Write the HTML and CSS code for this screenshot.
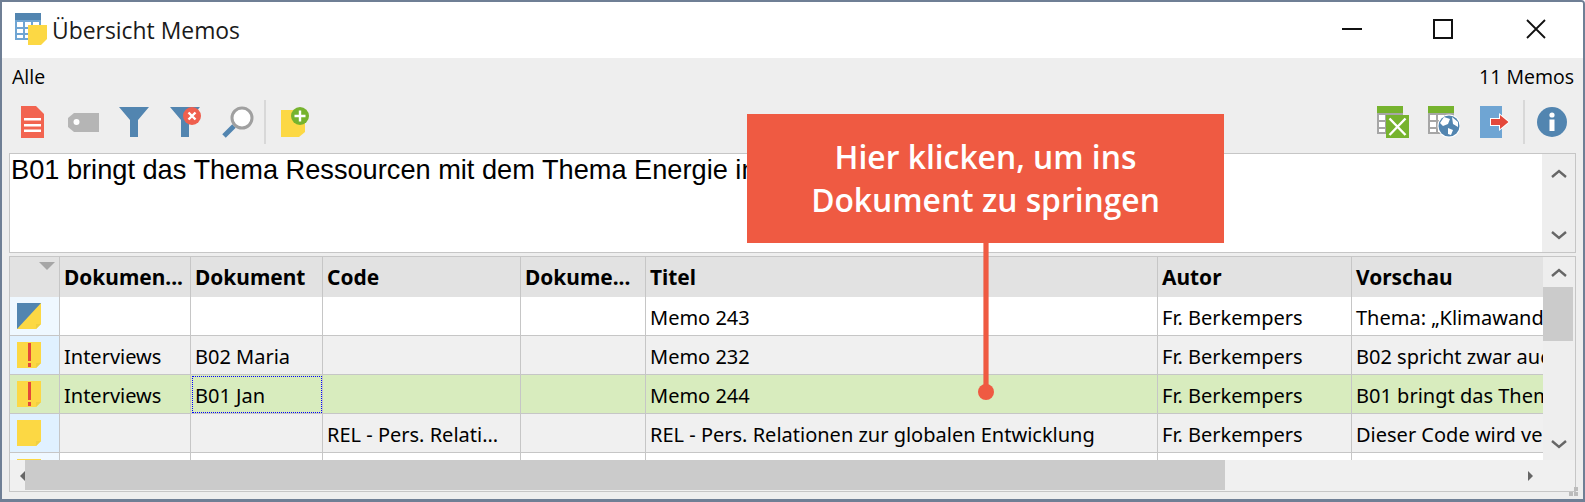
FILE: index.html
```html
<!doctype html>
<html lang="de">
<head>
<meta charset="utf-8">
<title>Übersicht Memos</title>
<link rel="stylesheet" href="styles.css">
</head>
<body>

<svg class="defs" width="0" height="0">
  <symbol id="note" viewBox="0 0 24 26">
    <path d="M0 0H24V21L19 26H0Z" fill="#fcd844"/>
    <path d="M24 21L19 26V21Z" fill="#f0cf40"/>
  </symbol>
  <symbol id="note-warn" viewBox="0 0 24 26">
    <use href="#note" width="24" height="26"/>
    <path d="M11 1H14V19H11ZM11 21H14V25H11Z" fill="#e4483a"/>
  </symbol>
  <symbol id="note-half" viewBox="0 0 24 26">
    <use href="#note" width="24" height="26"/>
    <path d="M0 0H24L0 26Z" fill="#5285b0"/>
  </symbol>
  <symbol id="funnel" viewBox="0 0 30 30">
    <path d="M0 0H30L19 13V30H11V13Z" fill="#5285b0"/>
  </symbol>
  <symbol id="sheet" viewBox="0 0 26 28">
    <path d="M0 0H26V28H0Z" fill="#a6a6a6"/>
    <path d="M0 0H26V7H0Z" fill="#76b32e"/>
    <path d="M2 9H8V14H2ZM10 9H16V14H10ZM18 9H24V14H18ZM2 16H8V21H2ZM10 16H16V21H10ZM18 16H24V21H18ZM2 23H8V26H2ZM10 23H16V26H10ZM18 23H24V26H18Z" fill="#fff"/>
  </symbol>
</svg>

<div class="window">

  <div class="titlebar">
    <svg class="appicon" width="32" height="32" viewBox="0 0 32 32">
      <path d="M0 0H26V7H0Z" fill="#5285b0"/>
      <path d="M0 7H26V27H0Z" fill="#6fa5d3"/>
      <path d="M2 9H8V14H2ZM10 9H16V14H10ZM18 9H24V14H18ZM2 16H8V20H2ZM10 16H16V20H10ZM2 22H8V25H2ZM10 22H16V25H10Z" fill="#fff"/>
      <path d="M13 12H32V26L26 32H13Z" fill="#fcd844"/>
    </svg>
    <span class="wintitle">Übersicht Memos</span>
    <div class="wincontrols">
      <svg class="winmin" width="20" height="20" viewBox="0 0 20 20"><path d="M0 10H20" stroke="#111" stroke-width="2"/></svg>
      <svg width="20" height="20" viewBox="0 0 20 20"><rect x="1" y="1" width="18" height="18" fill="none" stroke="#111" stroke-width="2"/></svg>
      <svg width="20" height="20" viewBox="0 0 20 20"><path d="M1 1L19 19M19 1L1 19" stroke="#111" stroke-width="1.8" fill="none"/></svg>
    </div>
  </div>

  <div class="infobar">
    <span>Alle</span>
    <span>11 Memos</span>
  </div>

  <div class="toolbar">
    <svg class="tb tb-doc" width="23" height="32" viewBox="0 0 23 32">
      <path d="M0 0H15L23 8V32H0Z" fill="#f26450"/>
      <path d="M3 12H20V14.5H3ZM3 18H20V20.5H3ZM3 23.5H20V26H3Z" fill="#fff"/>
    </svg>
    <svg class="tb tb-tag" width="31" height="19" viewBox="0 0 31 19">
      <path d="M6 0H31V19H6L0 14V5Z" fill="#b5b5b5"/>
      <circle cx="8.500" cy="9" r="3" fill="#fff"/>
    </svg>
    <svg class="tb tb-filter" width="30" height="30"><use href="#funnel"/></svg>
    <svg class="tb tb-filteroff" width="31" height="30" viewBox="0 0 31 30">
      <use href="#funnel" width="30" height="30"/>
      <circle cx="22" cy="9" r="9" fill="#ef5f4e"/>
      <path d="M18.500 5.500L25.500 12.500M25.500 5.500L18.500 12.500" stroke="#fff" stroke-width="2.400"/>
    </svg>
    <svg class="tb tb-search" width="32" height="32" viewBox="0 0 32 32">
      <path d="M2 30L12 20" stroke="#5285b0" stroke-width="5"/>
      <circle cx="20" cy="12" r="10" fill="#fff" stroke="#a0a0a0" stroke-width="3"/>
    </svg>
    <span class="tb-sep"></span>
    <svg class="tb tb-noteadd" width="29" height="32" viewBox="0 0 29 32">
      <path d="M0 4H24V26L18 31H0Z" fill="#fcd844"/>
      <circle cx="19" cy="10" r="9" fill="#76b32e"/>
      <path d="M19 4.500V15.500M13.500 10H24.500" stroke="#fff" stroke-width="2.400"/>
    </svg>
    <span class="tb-spacer"></span>
    <svg class="tb tb-xls" width="32" height="32" viewBox="0 0 32 32">
      <use href="#sheet" width="26" height="28"/>
      <path d="M9 9H32V32H9Z" fill="#76b32e"/>
      <path d="M12.500 12.500L28.500 29M28.500 12.500L12.500 29" stroke="#fff" stroke-width="2.400"/>
    </svg>
    <svg class="tb tb-web" width="32" height="32" viewBox="0 0 32 32">
      <use href="#sheet" width="26" height="28"/>
      <circle cx="21" cy="20" r="11.500" fill="#fff"/>
      <circle cx="21" cy="20" r="10.500" fill="#5285b0"/>
      <path d="M16 11L22 13L20 18L15 20L12 17ZM24 11L30 16L30 21L25 18ZM20 22L25 24L23 29L20 28Z" fill="#fff"/>
    </svg>
    <svg class="tb tb-exit" width="30" height="32" viewBox="0 0 30 32">
      <path d="M0 0H22V32H0Z" fill="#6fa5d3"/>
      <path d="M10 12H19V7L30 16L19 25V20H10Z" fill="#fff"/>
      <path d="M11 13H20V9L28.500 16L20 23V19H11Z" fill="#e4483a"/>
    </svg>
    <span class="tb-sep tb-sep-right"></span>
    <svg class="tb tb-info" width="30" height="30" viewBox="0 0 30 30">
      <circle cx="15" cy="15" r="15" fill="#5285b0"/>
      <circle cx="15" cy="8" r="2.600" fill="#fff"/>
      <path d="M12.500 12.500H17.500V24H12.500Z" fill="#fff"/>
    </svg>
  </div>

  <div class="preview">
    <div class="previewtext">B01 bringt das Thema Ressourcen mit dem Thema Energie in</div>
    <div class="vscroll preview-scroll">
      <svg class="arrow" width="16" height="9" viewBox="0 0 16 9"><path d="M1 8L8 2L15 8" fill="none" stroke="#666" stroke-width="2.400"/></svg>
      <svg class="arrow" width="16" height="9" viewBox="0 0 16 9"><path d="M1 1L8 7L15 1" fill="none" stroke="#666" stroke-width="2.400"/></svg>
    </div>
  </div>

  <div class="grid">
    <div class="gridtop">
      <div class="gridclip">
        <table class="memos">
          <colgroup>
            <col class="c-icon"><col class="c-type"><col class="c-doc"><col class="c-code"><col class="c-group"><col class="c-title"><col class="c-author"><col class="c-preview">
          </colgroup>
          <tr class="head">
            <th class="sortcell"><span class="sortmark"></span></th>
            <th>Dokumen...</th>
            <th>Dokument</th>
            <th>Code</th>
            <th>Dokume...</th>
            <th>Titel</th>
            <th>Autor</th>
            <th>Vorschau</th>
          </tr>
          <tr class="odd">
            <td class="iconcell"><svg class="noteicon"><use href="#note-half"/></svg></td>
            <td></td>
            <td></td>
            <td></td>
            <td></td>
            <td>Memo 243</td>
            <td>Fr. Berkempers</td>
            <td>Thema: „Klimawand</td>
          </tr>
          <tr class="even">
            <td class="iconcell"><svg class="noteicon"><use href="#note-warn"/></svg></td>
            <td>Interviews</td>
            <td>B02 Maria</td>
            <td></td>
            <td></td>
            <td>Memo 232</td>
            <td>Fr. Berkempers</td>
            <td>B02 spricht zwar auch</td>
          </tr>
          <tr class="selected">
            <td class="iconcell"><svg class="noteicon"><use href="#note-warn"/></svg></td>
            <td>Interviews</td>
            <td class="focus">B01 Jan</td>
            <td></td>
            <td></td>
            <td>Memo 244</td>
            <td>Fr. Berkempers</td>
            <td>B01 bringt das Thema</td>
          </tr>
          <tr class="even">
            <td class="iconcell"><svg class="noteicon"><use href="#note"/></svg></td>
            <td></td>
            <td></td>
            <td>REL - Pers. Relati...</td>
            <td></td>
            <td>REL - Pers. Relationen zur globalen Entwicklung</td>
            <td>Fr. Berkempers</td>
            <td>Dieser Code wird ver</td>
          </tr>
          <tr class="odd">
            <td class="iconcell"><svg class="noteicon"><use href="#note"/></svg></td>
            <td></td>
            <td></td>
            <td></td>
            <td></td>
            <td></td>
            <td></td>
            <td></td>
          </tr>
        </table>
      </div>
      <div class="vscroll grid-scroll">
        <svg class="arrow" width="16" height="9" viewBox="0 0 16 9"><path d="M1 8L8 2L15 8" fill="none" stroke="#666" stroke-width="2.400"/></svg>
        <div class="vthumb"></div>
        <svg class="arrow arrow-down" width="16" height="9" viewBox="0 0 16 9"><path d="M1 1L8 7L15 1" fill="none" stroke="#666" stroke-width="2.400"/></svg>
      </div>
    </div>
    <div class="hscroll">
      <svg class="harrow" width="5" height="10" viewBox="0 0 5 10"><path d="M5 0V10L0 5Z" fill="#666"/></svg>
      <div class="hthumb"></div>
      <svg class="harrow harrow-right" width="5" height="10" viewBox="0 0 5 10"><path d="M0 0V10L5 5Z" fill="#666"/></svg>
    </div>
  </div>

  <svg class="grip" width="9" height="9" viewBox="0 0 9 9"><path d="M5 0H9V4H5ZM0 5H4V9H0ZM5 5H9V9H5Z" fill="#bcbcbc"/></svg>

  <div class="callout">Hier klicken, um ins<br>Dokument zu springen</div>
  <div class="callout-line"></div>
  <div class="callout-dot"></div>
</div>

</body>
</html>
```

FILE: styles.css
```css
html, body {margin: 0; padding: 0; background: #fff;}
body {width: 1585px; height: 502px; overflow: hidden;}
.defs {position: absolute;}

.window {position: relative; box-sizing: border-box; width: 1585px; height: 502px; display: flex; flex-direction: column; background: #eee; border: solid #6f7f95; border-width: 2px 2px 3px 2px; border-top-right-radius: 4px; font-family: "Open Sans", sans-serif; color: #000; overflow: hidden;}

.titlebar {flex: none; height: 56px; display: flex; align-items: center; background: #fff; padding-left: 13px;}
.appicon {margin-top: -3px;}
.wintitle {margin-left: 5px; font-size: 22.900px; color: #1a1a1a;}
.wincontrols {margin-left: auto; display: flex; gap: 73px; padding-right: 37px; margin-top: -2px;}
.winmin {margin-right: -2px;}

.infobar {flex: none; height: 37px; display: flex; justify-content: space-between; align-items: center; padding: 0 9px 0 10px; font-size: 19.500px;}

.toolbar {flex: none; box-sizing: border-box; height: 58px; padding-bottom: 4px; display: flex; align-items: center;}
.tb {flex: none; display: block;}
.tb-doc {margin-left: 19px;}
.tb-tag {margin-left: 24px;}
.tb-filter {margin-left: 20px;}
.tb-filteroff {margin-left: 21px;}
.tb-search {margin-left: 21px;}
.tb-sep {flex: none; width: 2px; height: 44px; background: #d8d8d8; margin-left: 10px;}
.tb-noteadd {margin-left: 15px;}
.tb-spacer {flex: 1;}
.tb-web {margin-left: 19px;}
.tb-exit {margin-left: 20px;}
.tb-sep-right {margin-left: 13px;}
.tb-info {margin-left: 12px; margin-right: 16px;}

.preview {flex: none; margin: 0 7px; box-sizing: border-box; height: 100px; display: flex; border: 1px solid #c6c6c6;}
.previewtext {flex: 1; min-width: 0; background: #fff; font: 27.200px/32px "Liberation Sans", sans-serif; padding-left: 1px; white-space: nowrap; overflow: hidden;}

.vscroll {flex: none; width: 33px; display: flex; flex-direction: column; align-items: center; box-sizing: border-box;}
.preview-scroll {justify-content: space-between; padding: 15px 0 12px;}
.grid-scroll {width: 32px; padding-top: 11px;}
.arrow {display: block; flex: none;}
.vthumb {flex: none; align-self: flex-start; width: 30px; height: 54px; margin-top: 10px; background: #cbcbcb;}
.arrow-down {margin-top: auto; margin-bottom: 11px;}

.grid {flex: none; margin: 3px 7px 0; box-sizing: border-box; height: 236px; display: flex; flex-direction: column; border: 1px solid #c6c6c6;}
.gridtop {flex: none; height: 203px; display: flex;}
.gridclip {flex: 1; min-width: 0; overflow: hidden; background: #fff;}

.memos {table-layout: fixed; width: 1742px; border-collapse: separate; border-spacing: 0; font-family: "Noto Sans", sans-serif; font-size: 20px;}
.c-icon {width: 50px;}
.c-type {width: 131px;}
.c-doc {width: 132px;}
.c-code {width: 198px;}
.c-group {width: 125px;}
.c-title {width: 512px;}
.c-author {width: 194px;}
.c-preview {width: 400px;}
.memos th, .memos td {box-sizing: border-box; padding: 0 0 0 4px; white-space: nowrap; overflow: hidden; text-align: left; border-right: 1px solid #c6c6c6;}
.memos th {height: 40px; background: #e2e2e2; font-size: 20.900px; font-weight: 700;}
.memos td {height: 39px; padding-top: 2px; border-bottom: 1px solid #c6c6c6;}
.memos .sortcell {position: relative; padding: 0;}
.sortmark {position: absolute; top: 5px; left: 29px; border: solid transparent; border-width: 8px 8px 0; border-top-color: #a6a6a6;}
.odd td {background: #fff;}
.even td {background: #f0f0f0;}
.selected td {background: #d8ecbe;}
.memos .iconcell {padding: 0 0 0 7px; line-height: 0; vertical-align: middle;}
.odd .iconcell {background: #eff8ff;}
.even .iconcell {background: #e0f1ff;}
.noteicon {display: block; width: 24px; height: 26px;}
.memos .focus {outline: 1px dotted #00f; outline-offset: -2px;}

.hscroll {flex: none; height: 31px; display: flex; align-items: flex-start; background: #f0f0f0;}
.harrow {flex: none; margin: 11px 0 0 10px; display: block;}
.hthumb {flex: none; width: 1200px; height: 30px; background: #cbcbcb;}
.harrow-right {margin-left: 303px;}

.grip {position: absolute; right: 5px; bottom: 3px;}

/* annotation on top of the window */
.callout {position: absolute; left: 745px; top: 112px; width: 477px; height: 129px; box-sizing: border-box; padding-top: 21px; background: #ef5a42; color: #fff; font: 600 31.800px/43px "Open Sans", sans-serif; text-align: center;}
.callout-line {position: absolute; left: 982px; top: 241px; width: 4px; height: 150px; background: #ef5a42; box-shadow: 0 0 0 1px rgba(239, 90, 66, .6);}
.callout-dot {position: absolute; left: 976px; top: 382px; width: 16px; height: 16px; border-radius: 50%; background: #ef5a42;}
```
